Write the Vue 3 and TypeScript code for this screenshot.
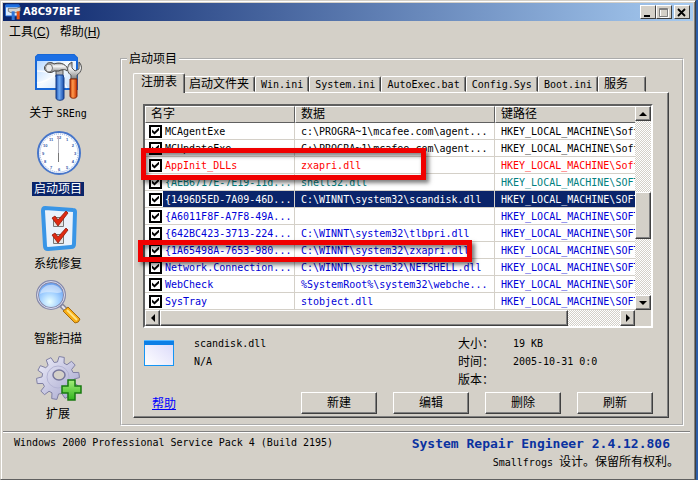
<script setup lang="ts">
import { ref } from 'vue'

interface Entry {
  name: string
  data: string
  key: string
  tone: string
  checked: boolean
}

const soft = 'HKEY_LOCAL_MACHINE\\Soft'
const SOFT = 'HKEY_LOCAL_MACHINE\\SOFT'

const entries = ref<Entry[]>([
  { name: 'MCAgentExe', data: 'c:\\PROGRA~1\\mcafee.com\\agent...', key: soft, tone: 'black', checked: true },
  { name: 'MCUpdateExe', data: 'C:\\PROGRA~1\\mcafee.com\\agent...', key: soft, tone: 'black', checked: true },
  { name: 'AppInit_DLLs', data: 'zxapri.dll', key: soft, tone: 'red', checked: true },
  { name: '{AEB6717E-7E19-11d...', data: 'shell32.dll', key: SOFT, tone: 'teal', checked: true },
  { name: '{1496D5ED-7A09-46D...', data: 'C:\\WINNT\\system32\\scandisk.dll', key: SOFT, tone: 'blue', checked: true },
  { name: '{A6011F8F-A7F8-49A...', data: '', key: SOFT, tone: 'blue', checked: true },
  { name: '{642BC423-3713-224...', data: 'C:\\WINNT\\system32\\tlbpri.dll', key: SOFT, tone: 'blue', checked: true },
  { name: '{1A65498A-7653-980...', data: 'C:\\WINNT\\system32\\zxapri.dll', key: SOFT, tone: 'blue', checked: true },
  { name: 'Network.Connection...', data: 'C:\\WINNT\\system32\\NETSHELL.dll', key: SOFT, tone: 'blue', checked: true },
  { name: 'WebCheck', data: '%SystemRoot%\\system32\\webche...', key: SOFT, tone: 'blue', checked: true },
  { name: 'SysTray', data: 'stobject.dll', key: SOFT, tone: 'blue', checked: true },
])
const selected = ref(4)

const tabs = [
  { text: '注册表', latin: false },
  { text: '启动文件夹', latin: false },
  { text: 'Win.ini', latin: true },
  { text: 'System.ini', latin: true },
  { text: 'AutoExec.bat', latin: true },
  { text: 'Config.Sys', latin: true },
  { text: 'Boot.ini', latin: true },
  { text: '服务', latin: false },
]
const activeTab = ref(0)
const actions = ['新建', '编辑', '删除', '刷新']

const hourMarks = Array.from({ length: 12 }, (_, i) => ({
  x: 24 + 16 * Math.sin((i * Math.PI) / 6),
  y: 24 - 16 * Math.cos((i * Math.PI) / 6),
  label: String(i === 0 ? 12 : i),
}))

// Outline of a ten-toothed cog centred on (24, 24)
const cogPoints = Array.from({ length: 10 }, (_, i) => {
  const corners: [number, number][] = [[-12, 16], [-7, 21.5], [7, 21.5], [12, 16]]
  return corners
    .map(([turn, radius]) => {
      const angle = ((i * 36 + 10 + turn) * Math.PI) / 180
      return `${24 + radius * Math.sin(angle)},${24 - radius * Math.cos(angle)}`
    })
    .join(' ')
}).join(' ')
</script>

<template>
  <div class="window">
    <header class="titlebar">
      <svg class="title-icon" viewBox="0 0 48 48" aria-hidden="true">
        <rect x="1" y="2" width="42" height="34" rx="3" fill="#dcecff" stroke="#1560d0" stroke-width="3" />
        <path d="M2 3h40v7H2z" fill="#1c6fe0" />
        <path d="M10 13h24l12-4v12l-8 5H18l-8-4z" fill="#d4d4d4" stroke="#555" stroke-width="2" />
        <rect x="20" y="22" width="9" height="26" fill="#2f74d8" />
        <rect x="35" y="22" width="9" height="24" fill="#ea5414" />
      </svg>
      <h1>A8C97BFE</h1>
      <div class="controls">
        <button class="ctl" type="button" aria-label="最小化">
          <svg viewBox="0 0 12 11"><path d="M2 8h6v2H2z" fill="#000" /></svg>
        </button>
        <button class="ctl" type="button" aria-label="最大化" disabled>
          <svg viewBox="0 0 12 11"><path d="M2.500 2.500h8v8h-8z" fill="none" stroke="#fff" /><path d="M1.500 1.500h8v8h-8zM1 2.500h9" fill="none" stroke="#808080" /></svg>
        </button>
        <button class="ctl close" type="button" aria-label="关闭">
          <svg viewBox="0 0 12 11"><path d="M2 2l7 7M9 2l-7 7" stroke="#000" stroke-width="1.800" /></svg>
        </button>
      </div>
    </header>

    <nav class="menubar">
      <button type="button">工具(<u>C</u>)</button>
      <button type="button">帮助(<u>H</u>)</button>
    </nav>

    <main class="body">
      <nav class="sidebar">
        <button class="nav-item" type="button">
          <svg viewBox="0 0 48 48" aria-hidden="true">
            <defs>
              <linearGradient id="pane" x1="0" y1="0" x2="1" y2="1">
                <stop offset="0" stop-color="#a9d0ff" /><stop offset=".5" stop-color="#f4faff" /><stop offset="1" stop-color="#bcd9fb" />
              </linearGradient>
              <linearGradient id="steel" x1="0" y1="0" x2="0" y2="1">
                <stop offset="0" stop-color="#8a8a8a" /><stop offset=".35" stop-color="#fafafa" /><stop offset="1" stop-color="#808080" />
              </linearGradient>
              <linearGradient id="blueGrip"><stop offset="0" stop-color="#1a4fae" /><stop offset=".4" stop-color="#73adf5" /><stop offset="1" stop-color="#174ba8" /></linearGradient>
              <linearGradient id="redGrip"><stop offset="0" stop-color="#c63a05" /><stop offset=".4" stop-color="#ff9a4c" /><stop offset="1" stop-color="#c93000" /></linearGradient>
            </defs>
            <path d="M4 2h36l3 3v31H2V4z" fill="url(#pane)" stroke="#1767d6" stroke-width="2" />
            <path d="M2 4l2-2h36l3 3v3H2z" fill="#1c6fe4" />
            <path d="M3 18c14 0 24 6 30 17M3 30c12-2 20-8 28-20" fill="none" stroke="#fff" stroke-width="1.500" opacity=".8" />
            <path d="M22 17h7v7h-7z" fill="#b4b4b4" stroke="#555" />
            <path d="M12 12c1-3 6-3 8-1 5-2 11-1 14 5l-1 2c-2-2-5-2-8 0h-5c-2 2-6 2-8 0-2-1-2-5 0-6z" fill="url(#steel)" stroke="#444" />
            <ellipse cx="15" cy="15" rx="3.500" ry="4" fill="#e9e9e9" stroke="#777" />
            <path d="M37 26v-4c-4-2-4-7-2-11l3-2v6l3 3 4-2V9c4 4 3 10-2 13v4z" fill="url(#steel)" stroke="#555" />
            <path d="M22 22h7l1 3v20c0 3-8 3-8 0z" fill="url(#blueGrip)" stroke="#173d84" />
            <path d="M36 26h7v17c0 3-7 3-7 0z" fill="url(#redGrip)" stroke="#84280a" />
          </svg>
          <span>关于 <span class="latin">SREng</span></span>
        </button>
        <button class="nav-item current" type="button">
          <svg viewBox="0 0 48 48" aria-hidden="true">
            <circle cx="25" cy="24" r="21" fill="#fff" stroke="#4776ca" stroke-width="2" />
            <g transform="translate(1 0)">
              <circle cx="24" cy="24" r="19" fill="none" stroke="#8ba8df" stroke-width="1" stroke-dasharray="1 1" />
              <text v-for="m in hourMarks" :key="m.label" :x="m.x" :y="m.y + 2" class="hour">{{ m.label }}</text>
              <path d="M23.500 7v17" stroke="#b4b4be" /><path d="M23.500 24v9" stroke="#777" />
            </g>
          </svg>
          <span>启动项目</span>
        </button>
        <button class="nav-item" type="button">
          <svg viewBox="0 0 48 48" aria-hidden="true">
            <path d="M11 4l28 2q2 0 2 2l-1 32q0 3-3 3l-23 2q-3 0-3-3L9 7q0-3 2-3z" fill="#eaf2fb" stroke="#3995e6" stroke-width="4" />
            <g fill="#e4e4e4" stroke="#777"><path d="M19.500 13.500h10v9h-10zM19.500 30.500h10v9h-10z" /></g>
            <path d="M18 14l3-2 3 4 8-9 2 2-10 13zM18 31l3-2 3 4 8-9 2 2-10 13z" fill="#e02a12" stroke="#8d1a0b" stroke-width=".8" />
          </svg>
          <span>系统修复</span>
        </button>
        <button class="nav-item" type="button">
          <svg viewBox="0 0 48 48" aria-hidden="true">
            <defs>
              <radialGradient id="lens" cx=".45" cy=".75" r=".75">
                <stop offset="0" stop-color="#e9ffff" /><stop offset=".5" stop-color="#9fceff" /><stop offset="1" stop-color="#5d94ea" />
              </radialGradient>
            </defs>
            <path d="M27 26l6 6" stroke="#858597" stroke-width="5" /><path d="M28 27l6 6" stroke="#e7e7f0" stroke-width="2" />
            <path d="M29 32l5-4 12 12q-1 4-5 4z" fill="#f8ad14" stroke="#a56b10" />
            <path d="M33 31l10 10" stroke="#ffe486" stroke-width="2" />
            <circle cx="17" cy="16" r="13.500" fill="url(#lens)" stroke="#8588a8" stroke-width="3" />
            <circle cx="17" cy="16" r="13.500" fill="none" stroke="#d7dbf0" stroke-width="1" />
            <path d="M6 15c2-11 18-13 22-2-6 3-12-2-22 2z" fill="#fff" opacity=".45" />
          </svg>
          <span>智能扫描</span>
        </button>
        <button class="nav-item" type="button">
          <svg viewBox="0 0 48 48" aria-hidden="true">
            <defs>
              <linearGradient id="cog" x1="0" y1="0" x2="1" y2="1"><stop offset="0" stop-color="#eeeefa" /><stop offset="1" stop-color="#a4a4cc" /></linearGradient>
              <linearGradient id="plus" x1="0" y1="0" x2="0" y2="1"><stop offset="0" stop-color="#a5ed7a" /><stop offset="1" stop-color="#32b41e" /></linearGradient>
            </defs>
            <polygon :points="cogPoints" fill="url(#cog)" stroke="#8080a4" stroke-linejoin="round" />
            <circle cx="24" cy="23" r="11" fill="none" stroke="#b4b4d4" />
            <ellipse cx="25" cy="21" rx="6" ry="5" fill="#d4d0c8" stroke="#77779c" stroke-width="1.500" />
            <path d="M34 26h7v6h6v7h-6v7h-7v-7h-6v-7h6z" fill="url(#plus)" stroke="#187a10" stroke-width="1.500" />
          </svg>
          <span>扩展</span>
        </button>
      </nav>

      <fieldset class="group">
        <legend>启动项目</legend>
        <div class="tabs" role="tablist">
          <button
            v-for="(t, i) in tabs"
            :key="t.text"
            class="tab"
            :class="{ active: i === activeTab, latin: t.latin }"
            type="button"
            role="tab"
            :aria-selected="i === activeTab"
            @click="activeTab = i"
          >{{ t.text }}</button>
        </div>
        <section class="panel">
          <div class="list">
            <div class="viewport">
              <table>
                <colgroup><col class="c-name" /><col class="c-data" /><col /></colgroup>
                <thead>
                  <tr><th>名字</th><th>数据</th><th>键路径</th></tr>
                </thead>
                <tbody>
                  <tr
                    v-for="(e, i) in entries"
                    :key="e.name"
                    :class="[e.tone, { selected: i === selected }]"
                    @click="selected = i"
                  >
                    <td class="name"><label><input v-model="e.checked" type="checkbox" /><span>{{ e.name }}</span></label></td>
                    <td>{{ e.data }}</td>
                    <td>{{ e.key }}</td>
                  </tr>
                </tbody>
              </table>
            </div>
            <div class="scroll vertical">
              <button class="arrow" type="button" aria-label="向上"><svg viewBox="0 0 8 8"><path d="M4 2l4 4H0z" /></svg></button>
              <div class="v-before"></div><div class="thumb v-thumb"></div><div class="v-after"></div>
              <button class="arrow" type="button" aria-label="向下"><svg viewBox="0 0 8 8"><path d="M0 2h8L4 6z" /></svg></button>
            </div>
            <div class="scroll horizontal">
              <button class="arrow" type="button" aria-label="向左"><svg viewBox="0 0 8 8"><path d="M6 0v8L2 4z" /></svg></button>
              <div class="thumb h-thumb"></div><div class="h-after"></div>
              <button class="arrow" type="button" aria-label="向右"><svg viewBox="0 0 8 8"><path d="M2 0v8l4-4z" /></svg></button>
            </div>
            <div class="mark first"></div>
            <div class="mark second"></div>
          </div>

          <div class="details">
            <svg class="file-icon" viewBox="0 0 30 26" aria-hidden="true">
              <defs><linearGradient id="file" x1="0" y1="1" x2="1" y2="0"><stop offset="0" stop-color="#fff" /><stop offset="1" stop-color="#d9d8fa" /></linearGradient></defs>
              <rect x=".5" y=".5" width="29" height="25" fill="url(#file)" stroke="#1595f5" />
              <path d="M0 0h30v5H0z" fill="#0d7fe6" /><path d="M0 0h30v1H0z" fill="#57b6ff" />
            </svg>
            <div class="file latin"><span>scandisk.dll</span><span>N/A</span></div>
            <dl>
              <dt>大小：</dt><dd>19 KB</dd>
              <dt>时间：</dt><dd>2005-10-31 0:0</dd>
              <dt>版本：</dt><dd></dd>
            </dl>
          </div>
          <div class="actions">
            <a href="#help">帮助</a>
            <div class="buttons">
              <button v-for="a in actions" :key="a" type="button">{{ a }}</button>
            </div>
          </div>
        </section>
      </fieldset>
    </main>

    <footer class="status">
      <p class="latin">Windows 2000 Professional Service Pack 4 (Build 2195)</p>
      <div class="brand">
        <strong>System Repair Engineer 2.4.12.806</strong>
        <p><span class="latin">Smallfrogs </span>设计。保留所有权利。</p>
      </div>
    </footer>
  </div>
</template>

<style>
body {
  margin: 0;
  background: #2c5ea8;
}
</style>

<style scoped>
* {
  box-sizing: border-box;
}
.window {
  display: flex;
  flex-direction: column;
  min-height: 100vh;
  margin-right: 2px;
  padding: 1px;
  background: #d4d0c8;
  border: 1px solid;
  border-color: #d4d0c8 #404040 #606060 #d4d0c8;
  box-shadow: inset 1px 1px #fff, inset -1px 0 #808080;
  font-family: "Liberation Sans", "Noto Sans CJK SC", sans-serif;
  font-size: 12px;
  line-height: 16px;
  color: #000;
}
button {
  padding: 0;
  border: 0;
  background: none;
  font: inherit;
  color: inherit;
}
p {
  margin: 0;
}
.latin {
  font-family: "DejaVu Sans Mono", "Liberation Mono", monospace;
  font-size: 10px;
  white-space: pre;
}

.titlebar {
  display: flex;
  align-items: center;
  height: 18px;
  margin: 1px;
  background: linear-gradient(90deg, #0a246a, #a6caf0);
  color: #fff;
}
.title-icon {
  width: 16px;
  height: 16px;
  margin: 0 2px;
}
h1 {
  margin: 0;
  font: bold 10px/16px "DejaVu Sans", "Liberation Sans", sans-serif;
  flex: 1;
}
.controls {
  display: flex;
  padding-right: 3px;
}
.ctl {
  display: flex;
  align-items: center;
  justify-content: center;
  width: 16px;
  height: 14px;
  background: #d4d0c8;
  border: 1px solid;
  border-color: #fff #404040 #404040 #fff;
}
.ctl svg {
  flex: none;
  width: 12px;
  height: 11px;
}
.ctl.close {
  margin-left: 2px;
}

.menubar {
  display: flex;
  gap: 10px;
  height: 20px;
  padding: 0 7px;
}
.menubar button {
  font-size: 12px;
}

.body {
  display: flex;
  gap: 7px;
  padding: 9px 10px 0 1px;
}
.sidebar {
  display: flex;
  flex-direction: column;
  gap: 7px;
  width: 110px;
  padding-top: 2px;
}
.nav-item {
  display: flex;
  flex-direction: column;
  align-items: center;
  gap: 4px;
}
.nav-item svg {
  width: 48px;
  height: 48px;
}
.nav-item > span {
  padding: 0 2px;
  line-height: 16px;
}
.nav-item.current > span {
  background: #0a246a;
  color: #fff;
  line-height: 14px;
  margin: 1px 0;
}
.hour {
  font: bold 4px "Liberation Sans", sans-serif;
  fill: #3558a8;
  text-anchor: middle;
}

.group {
  flex: 1;
  min-width: 0;
  margin: 0;
  padding: 6px 13px 6px 11px;
  border: 2px groove #fff;
}
legend {
  margin-left: -6px;
  padding: 0 2px;
}
.tabs {
  display: flex;
  align-items: flex-end;
  padding-left: 2px;
  height: 19px;
}
.tab {
  min-width: 48px;
  height: 16px;
  padding: 0 5px;
  text-align: left;
  line-height: 15px;
  background: #d4d0c8;
  border: 1px solid;
  border-color: #fff #404040 transparent #fff;
  border-radius: 2px 2px 0 0;
  box-shadow: inset -1px 0 #808080;
  white-space: nowrap;
}
.tab.active {
  position: relative;
  height: 20px;
  margin: 0 -2px -1px;
  padding: 0 7px 3px;
  border-bottom: 0;
}
.panel {
  padding: 11px 15px 3px 9px;
  border: 1px solid;
  border-color: #fff #404040 #404040 #fff;
  box-shadow: inset -1px -1px #808080;
}

.list {
  position: relative;
  display: grid;
  grid-template-columns: minmax(0, 1fr) 16px;
  border: 2px solid;
  border-color: #606060 #fff #fff #606060;
}
.viewport {
  overflow: hidden;
  background: #fff;
}
table {
  width: 100%;
  table-layout: fixed;
  border-collapse: separate;
  border-spacing: 0;
}
.c-name {
  width: 150px;
}
.c-data {
  width: 200px;
}
th {
  height: 17px;
  padding: 0 5px;
  background: #d4d0c8;
  border: 1px solid;
  border-color: #fff #606060 #606060 #fff;
  font-weight: normal;
  line-height: 15px;
  text-align: left;
}
th:last-child {
  border-right: 0;
}
td {
  height: 17px;
  padding: 0 0 0 6px;
  border-right: 1px solid #d4d0c8;
  border-bottom: 1px solid #d4d0c8;
  font: 10px/16px "DejaVu Sans Mono", "Liberation Mono", monospace;
  white-space: nowrap;
  overflow: hidden;
}
td:not(.name),
td label span {
  padding-top: 2px;
  line-height: 14px;
}
td:last-child {
  border-right: 0;
}
td.name {
  padding: 0 0 0 4px;
}
td label {
  display: flex;
  align-items: center;
}
td label span {
  flex: 1;
  margin-left: 1px;
  padding-left: 2px;
}
td input {
  display: grid;
  place-items: center;
  width: 13px;
  height: 13px;
  margin: 0;
  appearance: none;
  background: #fff;
  border: 2px solid #000;
}
td input:checked::before {
  content: "";
  width: 7px;
  height: 7px;
  background: #000;
  clip-path: polygon(0 28%, 36% 60%, 100% 0, 100% 38%, 36% 100%, 0 68%);
}
.red { color: #f00; }
.teal { color: #008080; }
.blue { color: #0000d8; }
.selected { color: #fff; }
.selected td:not(.name),
.selected label span {
  background: #0a246a;
}

.scroll {
  display: flex;
  background: repeating-conic-gradient(#fff 0 25%, #d4d0c8 0 50%) 0 0 / 2px 2px;
}
.vertical {
  flex-direction: column;
}
.horizontal {
  height: 16px;
}
.list::after {
  content: "";
  order: 1;
  background: #d4d0c8;
}
.arrow,
.thumb {
  background: #d4d0c8;
  border: 1px solid;
  border-color: #fff #404040 #404040 #fff;
  box-shadow: inset -1px -1px #808080;
}
.arrow {
  display: flex;
  align-items: center;
  justify-content: center;
  flex: 0 0 15px;
}
.arrow svg {
  width: 8px;
  height: 8px;
}
.v-before { flex: 72; }
.v-thumb { flex: 45; }
.v-after { flex: 57; }
.h-thumb { flex: 408; }
.h-after { flex: 52; }

.mark {
  position: absolute;
  border: 5px solid #f00000;
  box-shadow: 3px 3px 4px rgba(0, 0, 0, 0.5), inset 2px 3px 4px rgba(0, 0, 0, 0.5);
  pointer-events: none;
}
.mark.first {
  left: -4px;
  top: 42px;
  width: 285px;
  height: 32px;
}
.mark.second {
  left: -7px;
  top: 134px;
  width: 334px;
  height: 22px;
}

.details {
  display: flex;
  align-items: flex-start;
  padding-top: 7px;
  line-height: 18px;
}
.file-icon {
  width: 30px;
  height: 26px;
  margin: 5px 20px 0 1px;
}
.file {
  display: flex;
  flex-direction: column;
  flex: 1;
}
dl {
  display: grid;
  grid-template-columns: 55px 140px;
  grid-auto-rows: 18px;
  margin: 0;
}
dd {
  margin: 0;
  font: 10px/18px "DejaVu Sans Mono", "Liberation Mono", monospace;
}
.actions {
  display: flex;
  align-items: center;
  justify-content: space-between;
  padding: 3px 0 0 9px;
}
.actions a {
  color: #00f;
  padding-top: 2px;
}
.buttons {
  display: flex;
  gap: 16px;
}
.buttons button {
  width: 76px;
  height: 22px;
  border: 1px solid;
  border-color: #fff #404040 #404040 #fff;
  box-shadow: inset -1px -1px #808080;
  line-height: 18px;
}

.status {
  display: flex;
  justify-content: space-between;
  align-items: flex-start;
  flex: 1;
  margin: 5px 4px 0 1px;
  padding: 2px 11px 0;
  border-top: 1px solid #808080;
  box-shadow: inset 0 1px #fff;
}
.status > p {
  line-height: 18px;
}
.brand {
  text-align: right;
}
.brand strong {
  display: block;
  margin-right: 9px;
  font: bold 13px/20px "DejaVu Sans Mono", "Liberation Mono", monospace;
  color: #0a32a0;
}
</style>
